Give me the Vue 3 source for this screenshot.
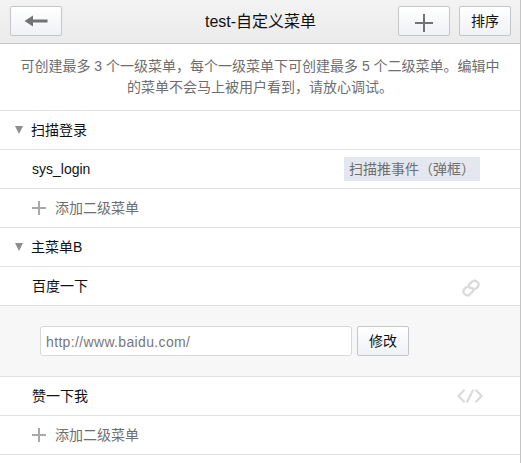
<script setup>
const groups = [
  {
    name: '扫描登录',
    items: [{ name: 'sys_login', type: 'event', label: '扫描推事件（弹框）' }],
  },
  {
    name: '主菜单B',
    items: [
      { name: '百度一下', type: 'link', url: 'http://www.baidu.com/', open: true },
      { name: '赞一下我', type: 'code' },
    ],
  },
]
</script>

<template>
  <main class="editor">
    <header class="bar">
      <button class="btn" aria-label="返回">
        <svg width="24" height="12" viewBox="0 0 24 12">
          <path d="M0.500 6L9 .5V4.5H23.500V7.500H9V11.500Z" fill="#737373" />
        </svg>
      </button>
      <h1 class="title">test-自定义菜单</h1>
      <div class="actions">
        <button class="btn" aria-label="添加">
          <svg class="plus-lg" width="18" height="18" viewBox="0 0 18 18">
            <path d="M9 0V18M0 9H18" stroke="#737373" stroke-width="2" />
          </svg>
        </button>
        <button class="btn">排序</button>
      </div>
    </header>

    <p class="notice">
      <span>可创建最多 3 个一级菜单，每个一级菜单下可创建最多 5 个二级菜单。编辑中</span>
      <span>的菜单不会马上被用户看到，请放心调试。</span>
    </p>

    <section v-for="group in groups" :key="group.name">
      <div class="row group">
        <svg class="caret" width="8" height="8" viewBox="0 0 8 8">
          <path d="M0 0H8L4 8Z" fill="#8e8e8e" />
        </svg>
        <span>{{ group.name }}</span>
      </div>
      <template v-for="item in group.items" :key="item.name">
        <div class="row item">
          <span>{{ item.name }}</span>
          <span v-if="item.type === 'event'" class="tag">{{ item.label }}</span>
          <svg v-else-if="item.type === 'link'" class="icon-link" width="18" height="18" viewBox="0 0 18 18">
            <path
              d="M13 10.500L15.600 7.900C18.400 4.600 14 -.2 10.400 2.500L7.400 5.300C5.400 7.500 6.800 8.800 9 9C11.200 9.200 12.600 10.500 10.600 12.700L7.600 15.500C4 18.200 -.4 13.400 2.400 10.100L5 7.500"
              fill="none"
              stroke="#dadada"
              stroke-width="2.300"
            />
          </svg>
          <svg v-else class="icon-code" width="26" height="14" viewBox="0 0 26 14">
            <path d="M7.500 .8L1.500 7L7.500 13.200M18.500 .8L24.500 7L18.500 13.200M16.200 .8L9.800 13.400" fill="none" stroke="#dadada" stroke-width="2.200" />
          </svg>
        </div>
        <div v-if="item.open" class="panel">
          <input class="field" type="text" :value="item.url" />
          <button class="btn">修改</button>
        </div>
      </template>
      <div class="row add">
        <svg width="14" height="14" viewBox="0 0 14 14">
          <path d="M7 0V14M0 7H14" stroke="#a9a9a9" stroke-width="2" />
        </svg>
        <span>添加二级菜单</span>
      </div>
    </section>
  </main>
</template>

<style>
body {
  margin: 0;
  overflow: hidden;
  background: #fff;
}
</style>

<style scoped>
.editor {
  box-sizing: border-box;
  width: 521px;
  height: 463px;
  border-right: 1px solid #c4c4c4;
  font: 14px/20px "Liberation Sans", "Noto Sans CJK SC", sans-serif;
  color: #111;
}
.bar {
  box-sizing: border-box;
  display: grid;
  grid-template-columns: 112px 1fr 112px;
  height: 44px;
  padding: 6px 9px 0 10px;
  border-bottom: 1px solid #c6c6c6;
  background: linear-gradient(#f3f3f3, #ebebeb);
}
.title {
  margin: 0;
  font-size: 16px;
  line-height: 32px;
  font-weight: 400;
  text-align: center;
}
.actions {
  display: flex;
  justify-content: flex-end;
  gap: 9px;
}
.btn {
  box-sizing: border-box;
  display: flex;
  align-items: center;
  justify-content: center;
  flex: none;
  width: 52px;
  height: 30px;
  padding: 0;
  border: 1px solid #c4c6c9;
  border-radius: 2px;
  background: linear-gradient(#fff, #eff1f5);
  font: inherit;
  color: #111;
}
.plus-lg {
  margin-top: 4px;
}
.notice {
  box-sizing: border-box;
  height: 67px;
  margin: 0;
  padding-top: 12px;
  border-bottom: 1px solid #e1e1e1;
  line-height: 21px;
  text-align: center;
  white-space: nowrap;
  color: #6e6e6e;
}
.notice span {
  display: block;
}
.row {
  box-sizing: border-box;
  display: flex;
  align-items: center;
  height: 39px;
  border-bottom: 1px solid #e1e1e1;
}
.group {
  padding-left: 15px;
  gap: 8px;
}
.item {
  justify-content: space-between;
  padding: 0 40px 0 32px;
}
.tag {
  box-sizing: border-box;
  width: 136px;
  height: 24px;
  padding-left: 5px;
  line-height: 24px;
  background: #e4e8ee;
  color: #6e6e6e;
}
.icon-link {
  margin-top: 4px;
}
.icon-code {
  margin-right: -3px;
}
.add {
  padding-left: 32px;
  gap: 9px;
  color: #6e6e6e;
}
.panel {
  box-sizing: border-box;
  display: flex;
  gap: 5px;
  height: 71px;
  padding: 20px 0 0 40px;
  border-bottom: 1px solid #e1e1e1;
  background: #f7f7f7;
}
.field {
  box-sizing: border-box;
  width: 312px;
  height: 30px;
  padding: 1px 5px 0;
  border: 1px solid #d8d8d8;
  border-radius: 3px;
  background: #fff;
  font: inherit;
  letter-spacing: 0.35px;
  color: #777;
}
</style>
